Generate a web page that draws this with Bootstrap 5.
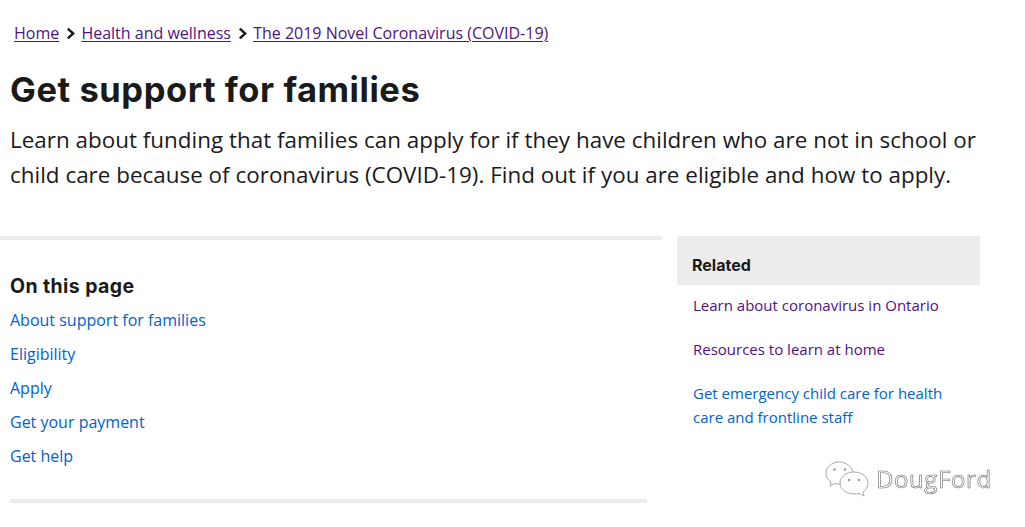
<!DOCTYPE html>
<html lang="en"><head><meta charset="utf-8"><title>Get support for families</title>
<link href="https://cdn.jsdelivr.net/npm/bootstrap@5.3.0/dist/css/bootstrap.min.css" rel="stylesheet">
<style>
html,body{height:527px;overflow:hidden}
body{font-family:"Open Sans",sans-serif;color:#1a1a1a;background:#fff;position:relative}
.pg{width:1025px;padding-top:22px}
.crumbs{padding-left:14px;font-size:16px;line-height:22px;gap:5.6px;margin-bottom:24px}
.crumbs a{color:#4f1283;text-decoration-thickness:1px;text-underline-offset:2px}
.crumbs svg{width:11px;height:13px;margin-top:1px}
.ttl{font-family:Inter,sans-serif;font-weight:700;font-size:34.5px;line-height:44px;margin:0 0 10px 10px;color:#1a1a1a;letter-spacing:.55px}
.intro{font-size:22.4px;line-height:35px;margin:0 0 44px 10px;width:990px;letter-spacing:.02px}
.cols{gap:15px;align-items:flex-start}
.leftc{width:662px}
.rule1{height:4px;background:#ededed}
.rule2{height:4px;background:#ededed;width:637px;margin:0 0 0 10px}
.otp{padding:32px 0 21px 10px}
.otp h2,.rel h2{font-family:Inter,sans-serif;font-weight:700;color:#1a1a1a;margin:0}
.otp h2{font-size:19.5px;line-height:28px;margin-bottom:8px;letter-spacing:.4px}
.otp a{display:block;color:#0062cc;text-decoration:none;font-size:16px;line-height:24px;margin-bottom:10px}
.rightc{width:303px}
.rel{background:#ededed;height:49px;padding:17px 15px 0}
.rel h2{font-size:16px;line-height:24px}
.rlist{padding:8px 28px 0 16px}
.rlist a{display:block;text-decoration:none;font-size:15px;line-height:24px;margin-bottom:20px}
.vis{color:#4f1283}.unv{color:#0062cc}
.wm{position:absolute;left:825px;top:460px;gap:5px;color:#fff;font-size:24px;line-height:30px;letter-spacing:.6px;-webkit-text-stroke:.6px #666;will-change:transform}
.wm svg{width:46px;height:38px}
</style></head><body>
<div class="pg">
<nav class="crumbs d-flex align-items-center">
<a href="#">Home</a>
<svg viewBox="0 0 10 12"><path d="M2.500 1.500 7.500 6l-5 4.500" fill="none" stroke="#1a1a1a" stroke-width="2.200"/></svg>
<a href="#">Health and wellness</a>
<svg viewBox="0 0 10 12"><path d="M2.500 1.500 7.500 6l-5 4.500" fill="none" stroke="#1a1a1a" stroke-width="2.200"/></svg>
<a href="#">The 2019 Novel Coronavirus (COVID-19)</a>
</nav>
<h1 class="ttl">Get support for families</h1>
<p class="intro">Learn about funding that families can apply for if they have children who are not in school or child care because of coronavirus (COVID-19). Find out if you are eligible and how to apply.</p>
<div class="cols d-flex">
<div class="leftc">
<div class="rule1"></div>
<div class="otp">
<h2>On this page</h2>
<a href="#">About support for families</a>
<a href="#">Eligibility</a>
<a href="#">Apply</a>
<a href="#">Get your payment</a>
<a href="#">Get help</a>
</div>
<div class="rule2"></div>
</div>
<div class="rightc">
<div class="rel"><h2>Related</h2></div>
<div class="rlist">
<a class="vis" href="#">Learn about coronavirus in Ontario</a>
<a class="vis" href="#">Resources to learn at home</a>
<a class="unv" href="#">Get emergency child care for health care and frontline staff</a>
</div>
</div>
</div>
</div>
<div class="wm d-flex align-items-center">
<svg viewBox="0 0 46 38"><g fill="#fff" stroke="#aaa" stroke-width="1"><path d="M14 2C7 2 1 7 1 13c0 4 2 7 5 9l-1 4 5-2.500c2 .5 3 .7 5 .7 7 0 13-5 13-11S21 2 14 2Z"/><path d="M29 12c-8 0-14 5-14 11s6 11 14 11c2 0 3-.2 5-.7l5 2.700-1-4c3-2 5-5.200 5-9 0-6-6-11-14-11Z"/></g><g fill="#999"><circle cx="9.500" cy="9.500" r="1.200"/><circle cx="20" cy="9.500" r="1.200"/><circle cx="24" cy="20" r="1.200"/><circle cx="34" cy="20" r="1.200"/></g></svg>
<span>DougFord</span>
</div>
</body></html>
